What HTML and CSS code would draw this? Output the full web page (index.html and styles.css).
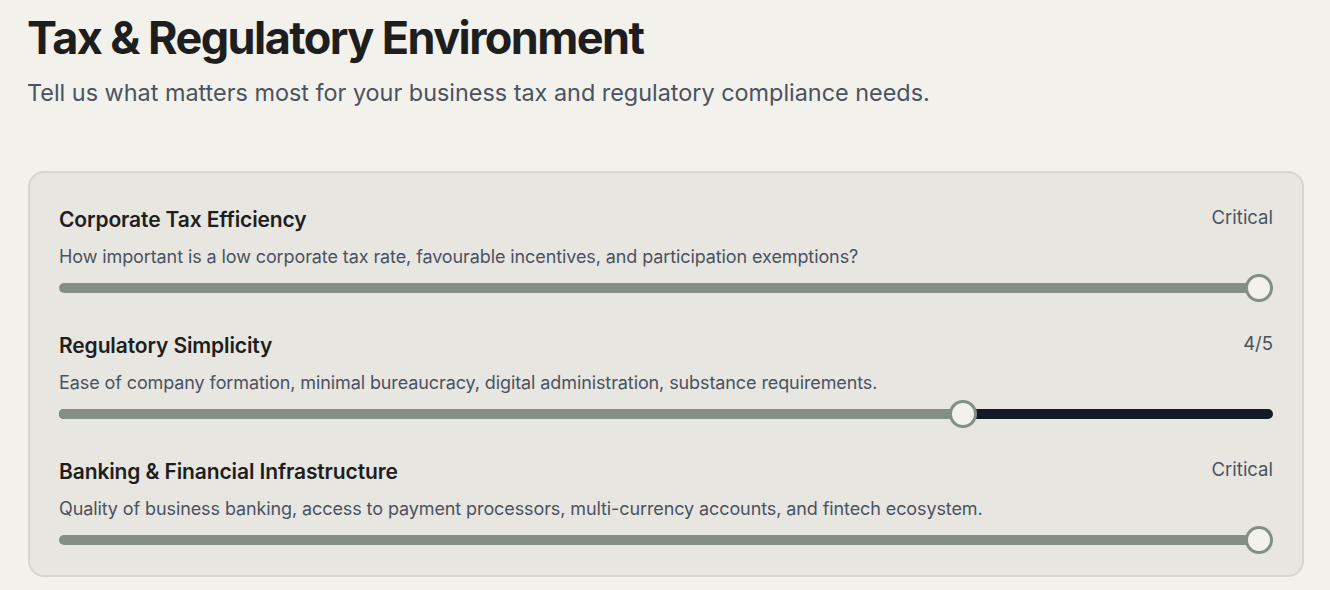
FILE: index.html
```html
<!DOCTYPE html>
<html lang="en">
<head>
<meta charset="utf-8">
<title>Tax &amp; Regulatory Environment</title>
<link rel="stylesheet" href="styles.css">
</head>
<body>
<main class="page">
  <header class="intro">
    <h1 class="title">Tax &amp; Regulatory Environment</h1>
    <p class="subtitle">Tell us what matters most for your business tax and regulatory compliance needs.</p>
  </header>
  <section class="card">
    <div class="item">
      <div class="item-head">
        <h2 class="item-title">Corporate Tax Efficiency</h2>
        <span class="item-value">Critical</span>
      </div>
      <p class="item-desc">How important is a low corporate tax rate, favourable incentives, and participation exemptions?</p>
      <div class="slider">
        <div class="track"><div class="fill" style="width:100%"></div></div>
        <div class="thumb-rail"><div class="thumb" style="left:100%"></div></div>
      </div>
    </div>
    <div class="item">
      <div class="item-head">
        <h2 class="item-title">Regulatory Simplicity</h2>
        <span class="item-value">4/5</span>
      </div>
      <p class="item-desc">Ease of company formation, minimal bureaucracy, digital administration, substance requirements.</p>
      <div class="slider">
        <div class="track"><div class="fill" style="width:75%"></div></div>
        <div class="thumb-rail"><div class="thumb" style="left:75%"></div></div>
      </div>
    </div>
    <div class="item">
      <div class="item-head">
        <h2 class="item-title">Banking &amp; Financial Infrastructure</h2>
        <span class="item-value">Critical</span>
      </div>
      <p class="item-desc">Quality of business banking, access to payment processors, multi-currency accounts, and fintech ecosystem.</p>
      <div class="slider">
        <div class="track"><div class="fill" style="width:100%"></div></div>
        <div class="thumb-rail"><div class="thumb" style="left:100%"></div></div>
      </div>
    </div>
  </section>
</main>
</body>
</html>
```

FILE: styles.css
```css
* { box-sizing: border-box; }
html, body { margin: 0; padding: 0; }
body {
  background: #f2f1ec;
  font-family: "Inter", "Liberation Sans", sans-serif;
  color: #1f1f1f;
}
.page {
  padding: 10px 26px 0 27px;
}
.title {
  margin: 0;
  font-size: 45px;
  line-height: 56px;
  font-weight: 700;
  letter-spacing: -0.035em;
  color: #1e1e1e;
}
.subtitle {
  margin: 11px 0 0 0;
  font-size: 23.4px;
  line-height: 32px;
  font-weight: 400;
  letter-spacing: 0;
  color: #4b5260;
}
.card {
  margin: 62px 0 0 1px;
  background: #e7e6e1;
  border: 2px solid #d6d5cf;
  border-radius: 16px;
  padding: 34px 29px 21px 29px;
  display: flex;
  flex-direction: column;
  gap: 31px;
}
.item { display: flex; flex-direction: column; }
.item-head {
  display: flex;
  justify-content: space-between;
  align-items: flex-start;
}
.item-title {
  margin: 0;
  font-size: 21px;
  line-height: 26px;
  font-weight: 600;
  letter-spacing: -0.12px;
  color: #1e1e1e;
}
.item-value {
  font-size: 18.5px;
  line-height: 20px;
  color: #4b5260;
}
.item-desc {
  margin: 13px 0 0 0;
  font-size: 18px;
  line-height: 22px;
  color: #4b5260;
  letter-spacing: -0.1px;
}
.slider {
  position: relative;
  height: 28px;
  margin-top: 6px;
}
.track {
  position: absolute;
  left: 0; right: 0; top: 9px;
  height: 10px;
  border-radius: 5px;
  background: #121b27;
  overflow: hidden;
}
.fill {
  height: 100%;
  background: #838f85;
}
.thumb-rail {
  position: absolute;
  left: 14px; right: 14px; top: 0; bottom: 0;
}
.thumb {
  position: absolute;
  top: 0;
  width: 28px;
  height: 28px;
  margin-left: -14px;
  border-radius: 50%;
  background: #f2f1ec;
  border: 3px solid #838f85;
}
```
